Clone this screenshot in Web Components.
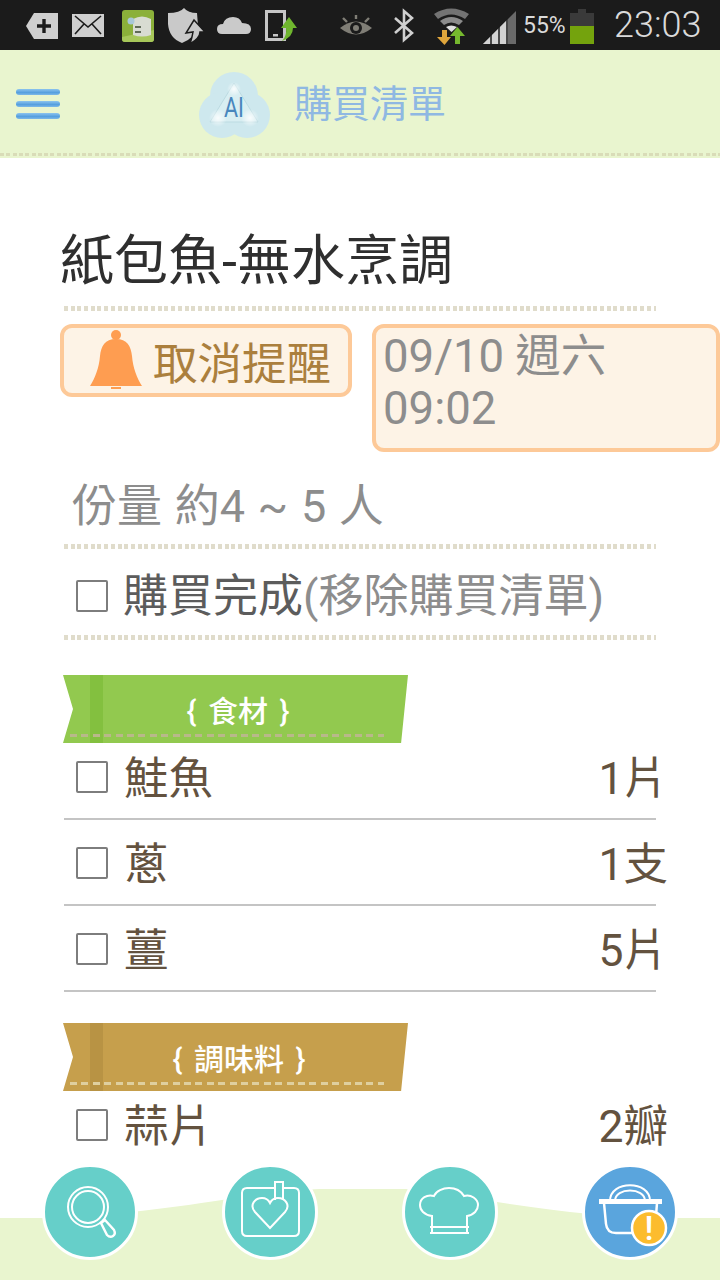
<!DOCTYPE html>
<html lang="zh-Hant">
<head>
<meta charset="utf-8">
<title>購買清單</title>
<style>
    html, body { margin: 0; padding: 0; background: #fff; }
    body { font-family: Roboto, "Noto Sans CJK TC", sans-serif; }
</style>
</head>
<body>
<shopping-app>
    <status-bar></status-bar>
    <app-header>購買清單</app-header>
    <recipe-title>紙包魚-無水烹調</recipe-title>
    <remind-row date="09/10 週六 09:02">取消提醒</remind-row>
    <serving-row>份量 約4 ~ 5 人</serving-row>
    <done-row><b>購買完成</b>(移除購買清單)</done-row>
    <ribbon-label>{ 食材 }</ribbon-label>
    <item-row qty="1片">鮭魚</item-row>
    <item-row qty="1支">蔥</item-row>
    <item-row qty="5片">薑</item-row>
    <ribbon-label kind="seasoning">{ 調味料 }</ribbon-label>
    <item-row qty="2瓣" last>蒜片</item-row>
    <bottom-nav slot="nav"></bottom-nav>
</shopping-app>

<script>
const DOTS = 'repeating-linear-gradient(90deg, #e0dccb 0 4px, transparent 4px 6.7px)';
const CJK = 'Roboto, "Noto Sans CJK TC", sans-serif';

class ShoppingApp extends HTMLElement {
    connectedCallback() {
        this.attachShadow({ mode: 'open' });
        this.shadowRoot.innerHTML = `
            <style>
                :host {
                    display: flex;
                    flex-direction: column;
                    position: relative;
                    width: 720px;
                    height: 1280px;
                    overflow: hidden;
                    background: #fff;
                    font-family: ${CJK};
                }
            </style>
            <slot></slot>
            <slot name="nav"></slot>
        `;
    }
}

class StatusBar extends HTMLElement {
    connectedCallback() {
        this.attachShadow({ mode: 'open' });
        this.shadowRoot.innerHTML = `
            <style>
                :host {
                    display: flex;
                    flex: none;
                    align-items: center;
                    height: 50px;
                    padding-left: 26px;
                    background: #1b1b1b;
                    color: #dadada;
                }
                svg { display: block; flex: none; height: 50px; }
                .pct { margin-left: 7px; width: 42px; font-size: 23px; white-space: nowrap; }
                .time { margin-left: 20px; font-size: 36px; font-weight: 300; white-space: nowrap; }
            </style>
            <svg width="32" viewBox="0 0 32 50">
                <path d="M0 26 L8 13 H32 V39 H8 Z" fill="#cfcfcf"/>
                <path d="M18 19 V33 M11 26 H25" stroke="#1b1b1b" stroke-width="3.4"/>
            </svg>
            <svg width="32" viewBox="0 0 32 50" style="margin-left:14px">
                <rect y="14" width="32" height="23" fill="#cfcfcf"/>
                <path d="M3 16 L16 27 L29 16 M3 34 L12 24 M29 34 L20 24" fill="none" stroke="#1b1b1b" stroke-width="1.6"/>
            </svg>
            <svg width="32" viewBox="0 0 32 50" style="margin-left:18px">
                <rect y="10" width="32" height="32" rx="3" fill="#8bb03a"/>
                <path d="M0 37 L32 30 V39 Q32 42 29 42 H3 Q0 42 0 39 Z" fill="#a7c75a"/>
                <path d="M11 19 Q20 14 29 19 V35 Q20 38 11 35 Z" fill="#d8dcd2"/>
                <rect x="13" y="26" width="6" height="2" fill="#5f6a58"/>
                <rect x="13" y="31" width="6" height="2" fill="#5f6a58"/>
                <circle cx="9" cy="21" r="3.5" fill="#a8c8d8"/>
            </svg>
            <svg width="36" viewBox="0 0 36 50" style="margin-left:14px">
                <path d="M0 13 Q12 13 16 8 Q20 13 29 13 L30 26 Q27 38 14 43 Q1 38 0 24 Z" fill="#c9c9c9"/>
                <path d="M26 20 L37 32 H32 Q32 38 22 44 Q24 38 25 32 L18 33 Z" fill="#c9c9c9" stroke="#1b1b1b" stroke-width="1.5"/>
            </svg>
            <svg width="34" viewBox="0 0 34 50" style="margin-left:13px">
                <path d="M5 34 Q0 34 0 29 Q0 24 6 24 Q8 17 16 17 Q23 17 25 23 Q34 23 34 29 Q34 34 29 34 Z" fill="#cacaca"/>
            </svg>
            <svg width="32" viewBox="0 0 32 50" style="margin-left:14px">
                <path d="M1.500 11.500 H19.500 V39.500 H1.500 Z" fill="none" stroke="#c6c6c6" stroke-width="3"/>
                <rect x="8" y="34" width="5" height="2.500" fill="#c6c6c6"/>
                <path d="M24 17 L32 28 H28 Q28 37 17 41 Q22 36 21 28 H16 Z" fill="#6fb62e"/>
            </svg>
            <svg width="32" viewBox="0 0 32 50" style="margin-left:43px">
                <path d="M0 28 Q16 15 32 28 Q16 41 0 28 Z" fill="#807e76"/>
                <circle cx="16" cy="28" r="6" fill="#1b1b1b"/>
                <circle cx="16" cy="28" r="3" fill="#807e76"/>
                <path d="M3 18 L7 22 M16 15 V19 M29 18 L25 22" stroke="#807e76" stroke-width="2.400"/>
            </svg>
            <svg width="20" viewBox="0 0 20 50" style="margin-left:22px">
                <path d="M1 18 L18 33 L10 40 V11 L18 18 L1 33" fill="none" stroke="#d0d0d0" stroke-width="2.600"/>
            </svg>
            <svg width="35" viewBox="0 0 35 50" style="margin-left:20px">
                <path d="M0 14 Q17 3 35 14 L31 19 Q17 10 4 19 Z" fill="#737373"/>
                <path d="M6 21 Q17 13 29 21 L25 25 Q17 20 10 25 Z" fill="#8b8b8b"/>
                <path d="M12 27 Q17 24 23 27 L17.500 32 Z" fill="#e0e0e0"/>
                <path d="M8 30 H13 V37 H17 L10.500 45 L3 37 H8 Z" fill="#e0a63c"/>
                <path d="M21 44 H26 V36 H31 L23.500 27 L16 36 H21 Z" fill="#76b82e"/>
            </svg>
            <svg width="33" viewBox="0 0 33 50" style="margin-left:14px">
                <path d="M0 44 L33 11 V44 Z" fill="#6a6a6a"/>
                <path d="M0 44 L25 19 V44 Z" fill="#d2d2d2"/>
                <path d="M8 34 V44 M16 27 V44 M24 19 V44" stroke="#1b1b1b" stroke-width="1.500"/>
            </svg>
            <div class="pct">55%</div>
            <svg width="24" viewBox="0 0 24 50" style="margin-left:5px">
                <path d="M8 9 H16 V13 H24 V26 H0 V13 H8 Z" fill="#3a3a3a"/>
                <rect y="26" width="24" height="18" fill="#74a30d"/>
            </svg>
            <div class="time">23:03</div>
        `;
    }
}

class AppHeader extends HTMLElement {
    connectedCallback() {
        this.attachShadow({ mode: 'open' });
        this.shadowRoot.innerHTML = `
            <style>
                :host {
                    display: flex;
                    flex: none;
                    align-items: center;
                    box-sizing: border-box;
                    height: 108px;
                    padding: 0 0 8px 16px;
                    background:
                        repeating-linear-gradient(90deg, #d9dcb8 0 4px, transparent 4px 6.3px) 0 103px / 100% 3px no-repeat,
                        #e9f5cf;
                    color: #8fb8e2;
                    font-size: 38px;
                    white-space: nowrap;
                }
                .menu { display: flex; flex-direction: column; gap: 6px; width: 44px; margin-top: 8px; }
                .menu i {
                    display: block;
                    height: 6px;
                    border-radius: 3px;
                    background: linear-gradient(#8cc4ee, #559fde 60%, #7eb9e8);
                }
                .logo { display: block; margin: 10px 24px 0 138px; }
            </style>
            <div class="menu"><i></i><i></i><i></i></div>
            <svg class="logo" width="72" height="66" viewBox="0 0 72 66">
                <defs>
                    <radialGradient id="glow">
                        <stop offset="0" stop-color="#fff" stop-opacity=".85"/>
                        <stop offset="1" stop-color="#fff" stop-opacity="0"/>
                    </radialGradient>
                </defs>
                <g fill="#cee8ee">
                    <circle cx="36" cy="24" r="24"/>
                    <circle cx="24" cy="43" r="23"/>
                    <circle cx="49" cy="43" r="23"/>
                </g>
                <path d="M36 11 L12 50 H60 Z" fill="#d8eef2" stroke="#bcdbe2" stroke-width="1"/>
                <circle cx="36" cy="17" r="7" fill="url(#glow)"/>
                <circle cx="20" cy="46" r="9" fill="url(#glow)"/>
                <circle cx="52" cy="46" r="9" fill="url(#glow)"/>
                <text x="26" y="45" font-family="Roboto" font-size="27" fill="#4886bd" textLength="20" lengthAdjust="spacingAndGlyphs">AI</text>
            </svg>
            <slot></slot>
        `;
    }
}

// shared dotted rule goes under the title, serving and done rows
const ruled = `
    background: ${DOTS} 64px 100% / 592px 5px no-repeat;
`;

class RecipeTitle extends HTMLElement {
    connectedCallback() {
        this.attachShadow({ mode: 'open' });
        this.shadowRoot.innerHTML = `
            <style>
                :host {
                    display: block;
                    flex: none;
                    box-sizing: border-box;
                    height: 153px;
                    padding: 68px 0 0 60px;
                    color: #2f2f2f;
                    font-size: 54px;
                    line-height: 72px;
                    white-space: nowrap;
                    ${ruled}
                }
            </style>
            <slot></slot>
        `;
    }
}

class RemindRow extends HTMLElement {
    connectedCallback() {
        this.attachShadow({ mode: 'open' });
        const date = this.getAttribute('date');
        this.shadowRoot.innerHTML = `
            <style>
                :host {
                    display: flex;
                    flex: none;
                    align-items: flex-start;
                    gap: 20px;
                    height: 128px;
                    margin-top: 13px;
                    padding-left: 60px;
                    font-size: 44.500px;
                }
                .btn, .date {
                    box-sizing: border-box;
                    border: 4px solid #fdc998;
                    border-radius: 12px;
                    background: #fdf3e6;
                }
                .btn {
                    display: flex;
                    align-items: center;
                    width: 292px;
                    height: 73px;
                    padding-left: 26px;
                    color: #ab7f3d;
                    white-space: nowrap;
                }
                .btn svg { display: block; flex: none; margin: -2px 11px 0 0; }
                .date {
                    width: 348px;
                    height: 128px;
                    padding: 3px 0 0 7px;
                    color: #8d8d8d;
                    font-size: 45.500px;
                    line-height: 52px;
                }
            </style>
            <div class="btn">
                <svg width="52" height="60" viewBox="0 0 52 60">
                    <circle cx="26" cy="5" r="5" fill="#fe9d51"/>
                    <path d="M26 9 C15 9 11 16 10 26 C9 38 5 48 0 56 H52 C47 48 43 38 42 26 C41 16 37 9 26 9 Z" fill="#fe9d51"/>
                    <path d="M21 58 H31" stroke="#fe9d51" stroke-width="2"/>
                </svg>
                <slot></slot>
            </div>
            <div class="date">${date}</div>
        `;
    }
}

class ServingRow extends HTMLElement {
    connectedCallback() {
        this.attachShadow({ mode: 'open' });
        this.shadowRoot.innerHTML = `
            <style>
                :host {
                    display: flex;
                    flex: none;
                    align-items: center;
                    box-sizing: border-box;
                    height: 97px;
                    padding: 3px 0 0 72px;
                    color: #8d8d8d;
                    font-size: 45px;
                    word-spacing: 1.500px;
                    white-space: nowrap;
                    ${ruled}
                }
            </style>
            <slot></slot>
        `;
    }
}

class DoneRow extends HTMLElement {
    connectedCallback() {
        this.attachShadow({ mode: 'open' });
        this.shadowRoot.innerHTML = `
            <style>
                :host {
                    display: flex;
                    flex: none;
                    align-items: center;
                    gap: 15px;
                    box-sizing: border-box;
                    height: 91px;
                    padding: 0 0 4px 76px;
                    color: #8d8d8d;
                    font-size: 45px;
                    white-space: nowrap;
                    ${ruled}
                }
                .box {
                    flex: none;
                    box-sizing: border-box;
                    width: 32px;
                    height: 32px;
                    margin-top: 7px;
                    border: 2px solid #7d7d7d;
                    border-radius: 2px;
                }
                ::slotted(b) { font-weight: 400; color: #5c5c5c; }
            </style>
            <div class="box"></div>
            <div><slot></slot></div>
        `;
    }
}

class RibbonLabel extends HTMLElement {
    connectedCallback() {
        this.attachShadow({ mode: 'open' });
        const seasoning = this.getAttribute('kind') === 'seasoning';
        const base = seasoning ? '#c69f4c' : '#92c94f';
        const band = seasoning ? '#b89344' : '#83c03f';
        const dash = seasoning ? '#dfcf9f' : '#b9b88a';
        this.shadowRoot.innerHTML = `
            <style>
                :host {
                    display: flex;
                    flex: none;
                    align-items: center;
                    justify-content: center;
                    box-sizing: border-box;
                    width: 345px;
                    height: 68px;
                    margin: ${seasoning ? 31 : 35}px 0 -9px 63px;
                    padding-left: ${seasoning ? 7 : 5}px;
                    clip-path: polygon(0 0, 100% 0, 98% 100%, 0 100%, 10px 50%);
                    background:
                        repeating-linear-gradient(90deg, ${dash} 0 7px, transparent 7px 11.400px) 7px 59px / 314px 3px no-repeat,
                        linear-gradient(${band}, ${band}) 27px 0 / 13px 100% no-repeat,
                        ${base};
                    color: #fff;
                    font-size: 30px;
                    font-weight: 500;
                    word-spacing: 4px;
                    white-space: nowrap;
                }
            </style>
            <slot></slot>
        `;
    }
}

class ItemRow extends HTMLElement {
    connectedCallback() {
        this.attachShadow({ mode: 'open' });
        const qty = this.getAttribute('qty');
        const line = this.hasAttribute('last') ? 'transparent' : '#c4c4c4';
        this.shadowRoot.innerHTML = `
            <style>
                :host {
                    display: flex;
                    flex: none;
                    align-items: center;
                    gap: 16px;
                    box-sizing: border-box;
                    width: 592px;
                    height: 86px;
                    margin-left: 64px;
                    padding: 0 0 4px 12px;
                    border-bottom: 2px solid ${line};
                    color: #63523f;
                    font-size: 44.500px;
                    white-space: nowrap;
                }
                .box {
                    flex: none;
                    box-sizing: border-box;
                    width: 32px;
                    height: 32px;
                    margin-top: 5px;
                    border: 2px solid #7d7d7d;
                    border-radius: 2px;
                }
                .qty { margin: 0 -12px 0 auto; }
            </style>
            <div class="box"></div>
            <div><slot></slot></div>
            <div class="qty">${qty}</div>
        `;
    }
}

class NavButton extends HTMLElement {
    connectedCallback() {
        this.attachShadow({ mode: 'open' });
        const active = this.hasAttribute('active');
        this.shadowRoot.innerHTML = `
            <style>
                :host {
                    display: block;
                    box-sizing: border-box;
                    width: 96px;
                    height: 96px;
                    border: 3px solid #fff;
                    border-radius: 50%;
                    background: ${active ? '#5aa5dd' : '#66cfc9'};
                }
                ::slotted(svg) { display: block; margin: -3px; }
            </style>
            <slot></slot>
        `;
    }
}

class BottomNav extends HTMLElement {
    connectedCallback() {
        this.attachShadow({ mode: 'open' });
        this.shadowRoot.innerHTML = `
            <style>
                /* floats over the list, so the last row runs behind it */
                :host {
                    display: grid;
                    grid-template-columns: repeat(4, 180px);
                    justify-items: center;
                    align-items: start;
                    position: absolute;
                    left: 0;
                    bottom: 0;
                    box-sizing: border-box;
                    width: 720px;
                    height: 116px;
                }
                .wave { grid-area: 1 / 1 / 2 / 5; justify-self: stretch; display: block; width: 720px; height: 116px; }
                nav-button { grid-row: 1; }
                svg.icon { fill: none; stroke: #fff; stroke-width: 2; }
            </style>
            <svg class="wave" viewBox="0 0 720 116">
                <path d="M0 54 H45 C90 54 170 44 222 36 C260 30 290 25 330 25 H400 C430 25 470 34 497 38 C530 43 560 47 590 50 C610 54 630 54 650 54 H720 V116 H0 Z" fill="#e9f5cf"/>
            </svg>
            <nav-button style="grid-column:1">
                <svg class="icon" width="96" height="96" viewBox="0 0 96 96">
                    <circle cx="46" cy="43" r="20"/>
                    <circle cx="46" cy="43" r="16"/>
                    <path d="M59 59 L63 56 L72 66 Q74 70 71 72 Q68 74 65 71 Z" stroke-width="2.400"/>
                </svg>
            </nav-button>
            <nav-button style="grid-column:2">
                <svg class="icon" width="96" height="96" viewBox="0 0 96 96">
                    <path d="M53 24 H25 Q20 24 20 29 V67 Q20 72 25 72 H72 Q77 72 77 67 V29 Q77 24 72 24 H61"/>
                    <path d="M53 36 V18 H61 V36"/>
                    <path d="M48 64 L33 48 C27 41 33 34 40 34 C44 34 47 37 48 39 C49 37 52 34 56 34 C63 34 69 41 63 48 Z"/>
                </svg>
            </nav-button>
            <nav-button style="grid-column:3">
                <svg class="icon" width="96" height="96" viewBox="0 0 96 96">
                    <path d="M30 63 V52 C22 51 18 46 18 41 C18 34 25 30 32 32 C34 27 41 24 47 24 C53 24 59 27 62 32 C69 30 76 35 76 41 C76 46 72 51 65 52 V63"/>
                    <path d="M28 63 H67 M28 69 H67 M30 63 V69 M65 63 V69"/>
                </svg>
            </nav-button>
            <nav-button style="grid-column:4" active>
                <svg class="icon" width="96" height="96" viewBox="0 0 96 96">
                    <path d="M28 37 C28 16 68 16 68 37 M33 37 C33 23 63 23 63 37"/>
                    <path d="M18 36 H79 V39 H18 Z" fill="#fff"/>
                    <path d="M22 39 L24 60 Q25 69 34 69 H60 M75 39 L74 52" stroke-width="2.500"/>
                    <circle cx="67" cy="64" r="17" fill="#fcbc2e" stroke-width="2.500"/>
                    <text x="67" y="76" fill="#fff" stroke="none" font-family="Roboto" font-size="34" font-weight="500" text-anchor="middle">!</text>
                </svg>
            </nav-button>
        `;
    }
}

customElements.define('shopping-app', ShoppingApp);
customElements.define('status-bar', StatusBar);
customElements.define('app-header', AppHeader);
customElements.define('recipe-title', RecipeTitle);
customElements.define('remind-row', RemindRow);
customElements.define('serving-row', ServingRow);
customElements.define('done-row', DoneRow);
customElements.define('ribbon-label', RibbonLabel);
customElements.define('item-row', ItemRow);
customElements.define('nav-button', NavButton);
customElements.define('bottom-nav', BottomNav);
</script>
</body>
</html>
